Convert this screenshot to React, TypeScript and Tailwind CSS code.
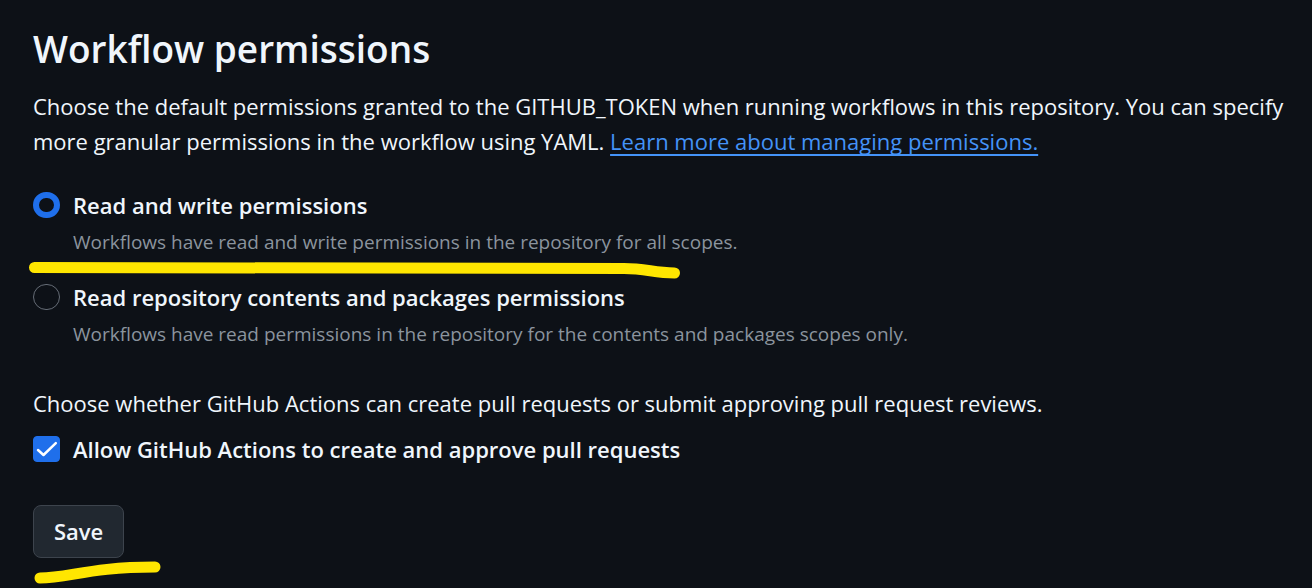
import React from "react";

type OptionProps = { id: string; title: string; note: string; checked?: boolean; children?: React.ReactNode };

function Option({ id, title, note, checked, children }: OptionProps) {
  return (
    <div className="relative flex gap-[13px]">
      <input
        type="radio"
        id={id}
        name="workflow-permissions"
        defaultChecked={checked}
        aria-describedby={id + "-note"}
        className="m-0 mt-[5px] h-[26px] w-[27px] shrink-0 appearance-none rounded-full border border-[#656c76] bg-transparent checked:border-[6px] checked:border-[#1f6feb]"
      />
      <div className="flex flex-col gap-px">
        <label htmlFor={id} className="block text-[22px] leading-9 font-semibold">
          {title}
        </label>
        <p id={id + "-note"} className="text-[19px] leading-9 text-[#8b949e]">
          {note}
        </p>
      </div>
      {children}
    </div>
  );
}

export default function App() {
  return (
    <main className="min-h-screen bg-[#0d1117] pt-[19px] pr-4 pb-6 pl-[33px] font-['Open_Sans','Noto_Sans',sans-serif] text-[#f0f6fc]">
      <h1 className="text-[37px] leading-[60px] font-semibold">Workflow permissions</h1>
      <p className="mt-2.5 text-[22px] leading-[35px]">
        Choose the default permissions granted to the GITHUB_TOKEN when running workflows in this repository. You can
        specify more granular permissions in the workflow using YAML.{" "}
        <a
          href="#permissions"
          className="text-[#4493f8] underline decoration-2 underline-offset-4 [text-decoration-skip-ink:none]"
        >
          Learn more about managing permissions.
        </a>
      </p>
      <form className="mt-7" onSubmit={(e) => e.preventDefault()}>
        <div className="flex flex-col gap-[19px]">
          <Option
            id="write"
            checked
            title="Read and write permissions"
            note="Workflows have read and write permissions in the repository for all scopes."
          >
            <svg
              aria-hidden="true"
              className="pointer-events-none absolute top-[72px] -left-[5px]"
              width="656"
              height="22"
              fill="none"
              stroke="#ffe600"
              strokeWidth="11"
              strokeLinecap="round"
            >
              <path d="M6.500 8.500C70 10 240 9.500 596 9.500C618 9.500 626 14 646.500 14" />
            </svg>
          </Option>
          <Option
            id="read"
            title="Read repository contents and packages permissions"
            note="Workflows have read permissions in the repository for the contents and packages scopes only."
          />
        </div>
        <p className="mt-[33px] text-[22px] leading-9">
          Choose whether GitHub Actions can create pull requests or submit approving pull request reviews.
        </p>
        <div className="mt-2.5 flex gap-[13px]">
          <span className="relative mt-[5px] h-[26px] w-[27px] shrink-0">
            <input
              type="checkbox"
              id="allow"
              defaultChecked
              className="peer block size-full appearance-none rounded border border-[#656c76] checked:border-[#1f6feb] checked:bg-[#1f6feb]"
            />
            <svg
              aria-hidden="true"
              viewBox="0 0 27 26"
              className="pointer-events-none absolute inset-0 hidden size-full peer-checked:block"
              fill="none"
              stroke="white"
              strokeWidth="2.500"
              strokeLinecap="round"
              strokeLinejoin="round"
            >
              <path d="M5 14L10.500 19L22.800 7.200" />
            </svg>
          </span>
          <label htmlFor="allow" className="text-[22px] leading-9 font-semibold">
            Allow GitHub Actions to create and approve pull requests
          </label>
        </div>
        <div className="relative mt-[38px] w-fit">
          <button
            type="submit"
            className="block rounded-lg border border-[#3d444d] bg-[#212830] px-5 py-2 text-[22px] leading-[35px] font-semibold"
          >
            Save
          </button>
          <svg
            aria-hidden="true"
            className="pointer-events-none absolute top-14 left-0"
            width="132"
            height="24"
            fill="none"
            stroke="#ffe600"
            strokeWidth="11"
            strokeLinecap="round"
          >
            <path d="M7 17C35 17 58 6 122 6" />
          </svg>
        </div>
      </form>
    </main>
  );
}
